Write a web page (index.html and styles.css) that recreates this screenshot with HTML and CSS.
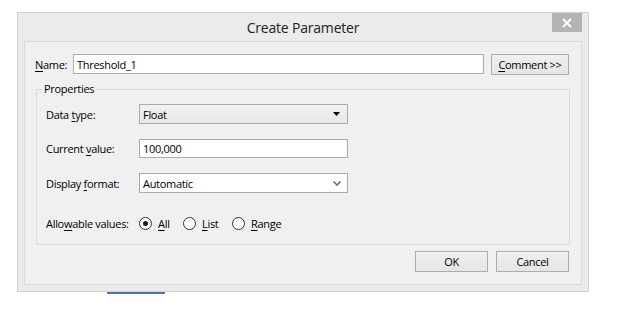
FILE: index.html
```html
<!DOCTYPE html>
<html lang="en">
  <head>
    <meta charset="utf-8" />
    <title>Create Parameter</title>
    <link rel="stylesheet" href="styles.css">
  </head>
  <body>

    <div class="dialog">
      <div class="titlebar">
        <span class="title">Create Parameter</span>
        <span class="close-btn">
          <svg width="12" height="10" viewBox="0 0 12 10"><path d="M2 1 L10 9 M10 1 L2 9" stroke="#fff" stroke-width="2"/></svg>
        </span>
      </div>

      <div class="panel">
        <div class="name-row">
          <label class="name-label" for="name"><u>N</u>ame:</label>
          <input class="text-box name-box" type="text" id="name" value="Threshold_1">
          <span class="btn comment-btn"><span><u>C</u>omment &gt;&gt;</span></span>
        </div>

        <div class="group">
          <span class="group-title">Properties</span>

          <div class="field-row first">
            <span class="field-label">Data <u>t</u>ype:</span>
            <div class="combo combo-list">
              <span>Float</span>
              <svg width="8" height="5" viewBox="0 0 8 5"><path d="M0 0 H7 L3.5 4 Z" fill="#000"/></svg>
            </div>
          </div>

          <div class="field-row">
            <span class="field-label">Current <u>v</u>alue:</span>
            <input class="text-box value-box" type="text" value="100,000">
          </div>

          <div class="field-row">
            <span class="field-label">Display <u>f</u>ormat:</span>
            <div class="combo combo-edit">
              <span>Automatic</span>
              <svg width="8" height="5" viewBox="0 0 8 5"><path d="M0.5 0.5 L4 4 L7.5 0.5" stroke="#666" stroke-width="1.5" fill="none"/></svg>
            </div>
          </div>

          <div class="radio-row">
            <span class="field-label">Allo<u>w</u>able values:</span>
            <span class="radio-opt opt-all"><span class="radio checked"></span><span><u>A</u>ll</span></span>
            <span class="radio-opt opt-list"><span class="radio"></span><span><u>L</u>ist</span></span>
            <span class="radio-opt"><span class="radio"></span><span><u>R</u>ange</span></span>
          </div>
        </div>

        <div class="button-row">
          <span class="btn dlg-btn">OK</span>
          <span class="btn dlg-btn">Cancel</span>
        </div>
      </div>
    </div>

    <div class="under-strip">
      <span class="tab-line"></span>
    </div>

  </body>
</html>
```

FILE: styles.css
```css
body {
    margin: 0;
    background: #fff;
    font-family: "Open Sans", sans-serif;
    font-size: 11px;
    letter-spacing: -0.3px;
    color: #000;
}
u {
    text-decoration: underline;
    text-underline-offset: 2px;
}

.dialog {
    margin: 12px 0 0 17px;
    width: 572px;
    height: 280px;
    box-sizing: border-box;
    border: 1px solid #d2d2d2;
    background: #ebebeb;
    display: flex;
    flex-direction: column;
}
.titlebar {
    position: relative;
    height: 28px;
    display: flex;
    align-items: center;
    justify-content: center;
}
.title {
    font-size: 14px;
    color: #222;
    letter-spacing: -0.2px;
}
.close-btn {
    position: absolute;
    top: 0;
    right: 6px;
    width: 30px;
    height: 19px;
    background: #b4b4b4;
    display: flex;
    align-items: center;
    justify-content: center;
}

.panel {
    flex: 1;
    margin: 0 6px 6px 6px;
    border: 1px solid #dadada;
    background: #f0f0f0;
    padding: 12px 12px 0 10px;
    display: flex;
    flex-direction: column;
}

/* name row */
.name-row {
    display: flex;
    align-items: center;
    height: 21px;
}
.name-label {
    width: 38px;
}
.text-box {
    box-sizing: border-box;
    height: 20px;
    border: 1px solid #ababab;
    background: #fff;
    padding: 0 3px;
    margin: 0;
    font-family: "Open Sans", sans-serif;
    font-size: 11px;
    letter-spacing: -0.3px;
    color: #000;
    outline: 0;
}
.name-box {
    flex: 1;
    align-self: flex-start;
}
.btn {
    box-sizing: border-box;
    height: 21px;
    border: 1px solid #acacac;
    background: linear-gradient(#f0f0f0, #e5e5e5);
    display: flex;
    align-items: center;
    justify-content: center;
}
.comment-btn {
    width: 78px;
    margin-left: 7px;
}

/* properties group */
.group {
    margin: 14px -1px 0 1px;
    height: 156px;
    box-sizing: border-box;
    border: 1px solid #dcdcdc;
    padding: 0 0 0 9px;
    display: flex;
    flex-direction: column;
}
.group-title {
    align-self: flex-start;
    margin: -9px 0 0 -4px;
    padding: 0 2px;
    line-height: 16px;
    background: #f0f0f0;
}
.field-row {
    display: flex;
    align-items: center;
    margin-top: 15px;
}
.field-row.first {
    margin-top: 7px;
}
.field-label {
    width: 93px;
}
.combo {
    box-sizing: border-box;
    width: 209px;
    height: 20px;
    border: 1px solid #ababab;
    padding: 0 6px 0 3px;
    display: flex;
    align-items: center;
    justify-content: space-between;
}
.combo-list {
    background: linear-gradient(#f2f2f2, #e6e6e6);
}
.combo-edit {
    background: #fff;
}
.value-box {
    width: 209px;
    height: 19px;
}

.radio-row {
    display: flex;
    align-items: center;
    margin-top: 22px;
    height: 16px;
}
.radio-opt {
    display: flex;
    align-items: center;
    gap: 6px;
}
.opt-all {
    width: 44px;
}
.opt-list {
    width: 49px;
}
.radio {
    box-sizing: border-box;
    width: 13px;
    height: 13px;
    border: 1px solid #333;
    border-radius: 50%;
    background: #fff;
    display: flex;
    align-items: center;
    justify-content: center;
}
.radio.checked::after {
    content: "";
    width: 5px;
    height: 5px;
    border-radius: 50%;
    background: #1a1a1a;
}

/* bottom buttons */
.button-row {
    display: flex;
    justify-content: flex-end;
    gap: 8px;
    margin-top: 6px;
}
.dlg-btn {
    width: 73px;
}

.under-strip {
    margin-left: 107px;
}
.tab-line {
    display: block;
    width: 58px;
    height: 2px;
    background: #4a76aa;
}
```
